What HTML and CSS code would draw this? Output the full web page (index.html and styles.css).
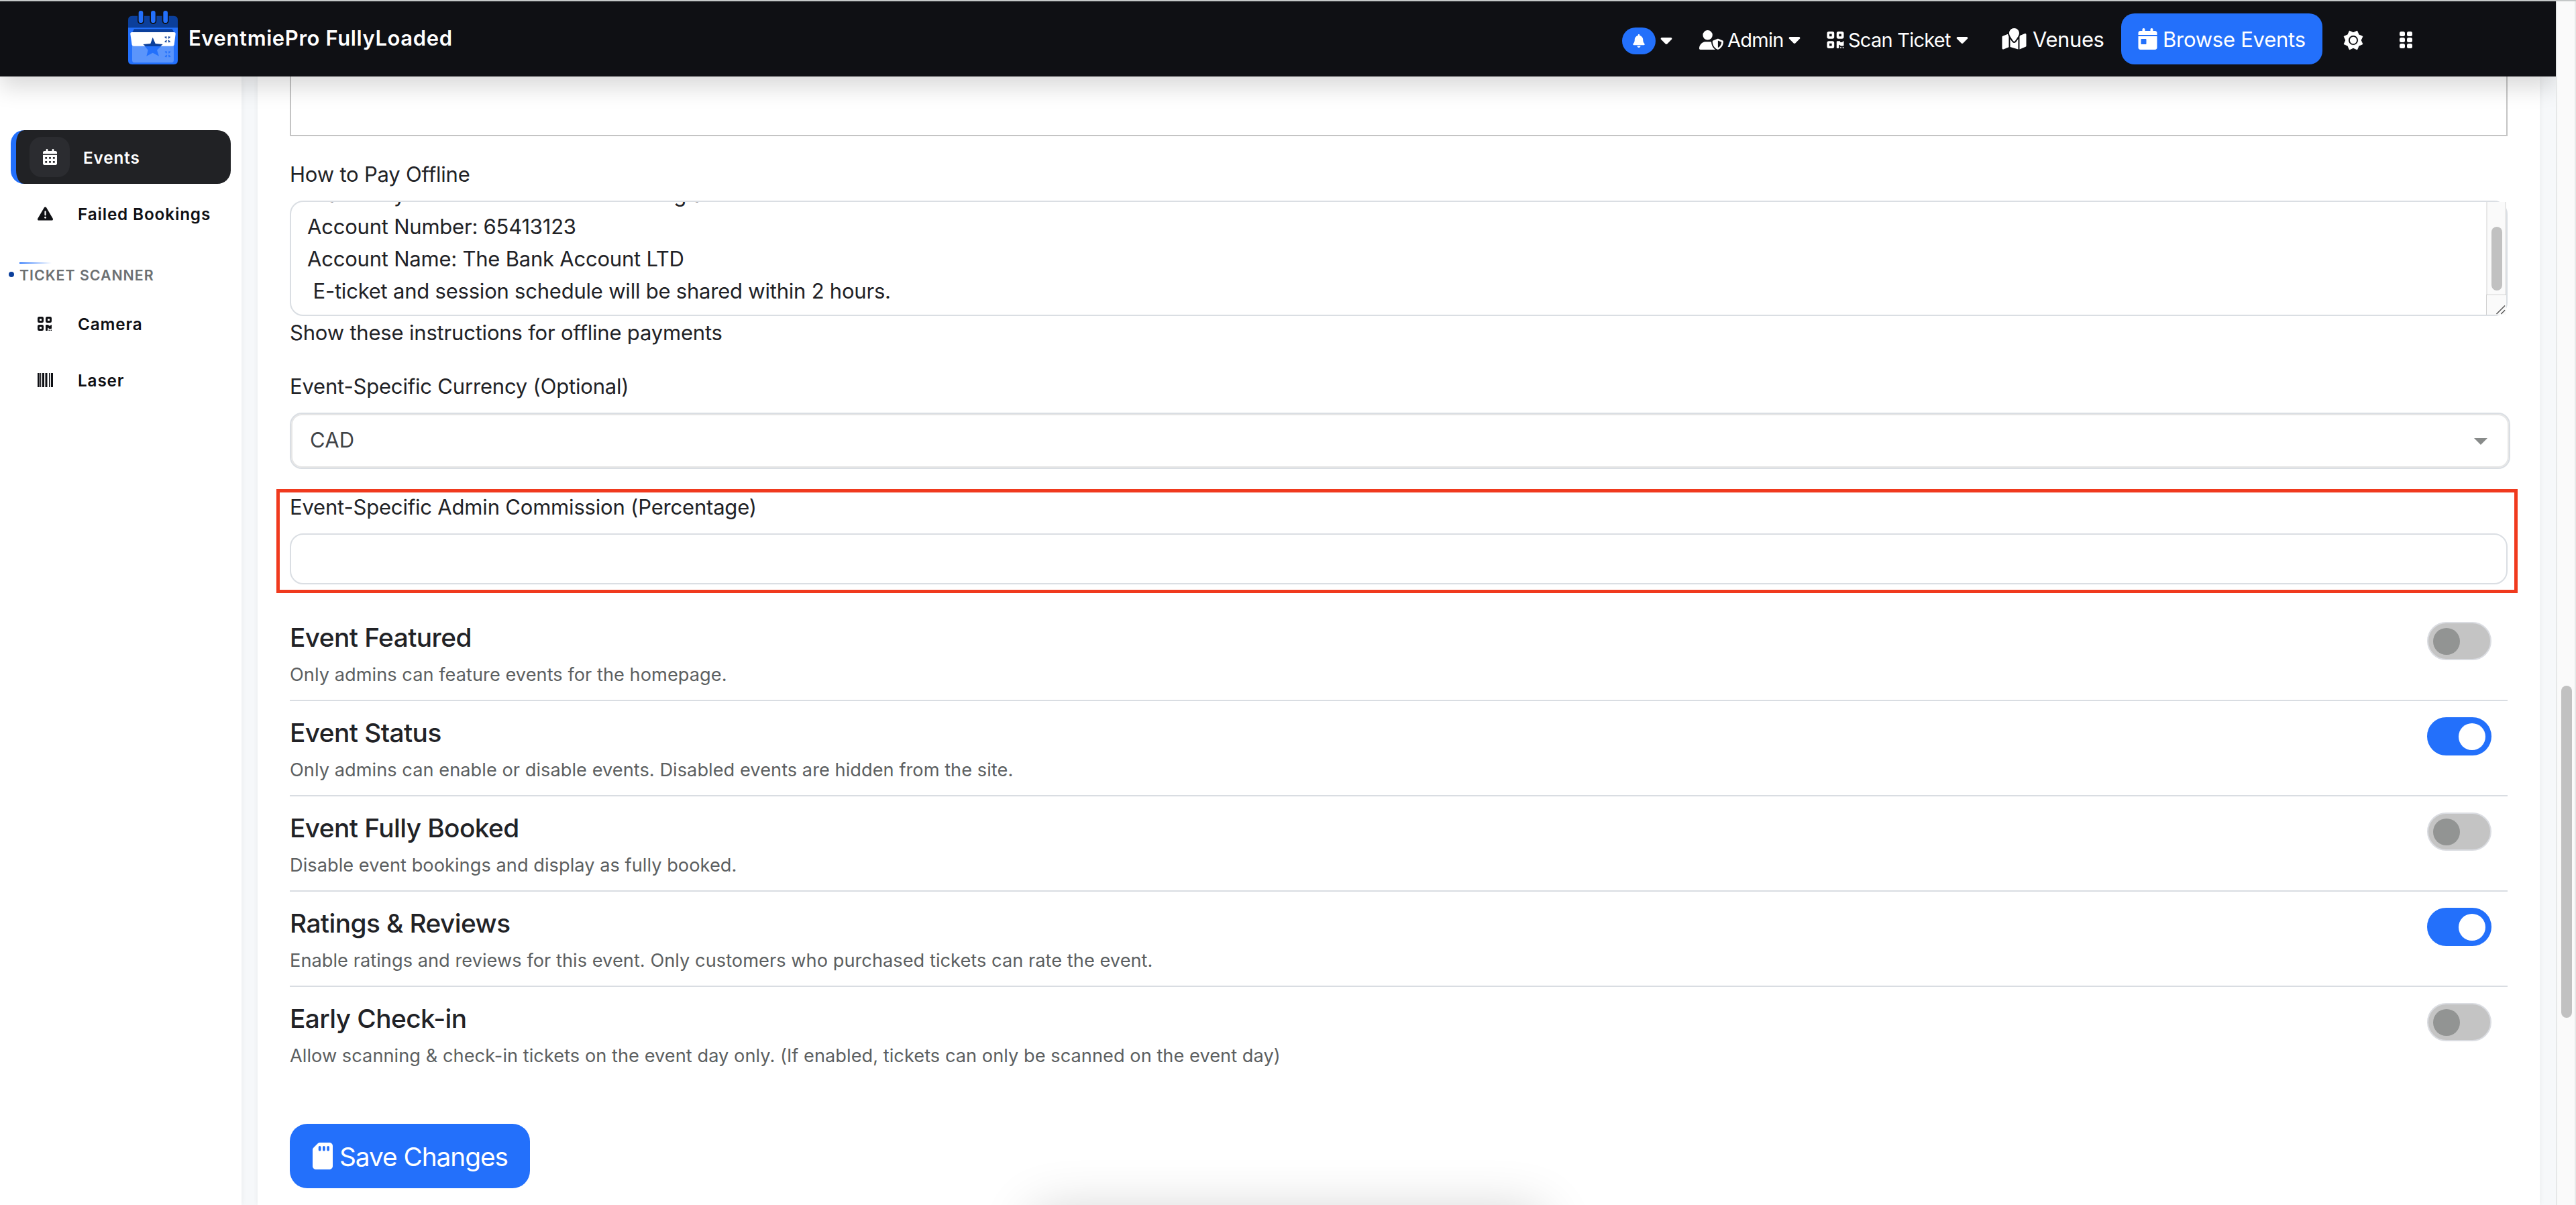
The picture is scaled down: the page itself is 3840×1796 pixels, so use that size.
FILE: index.html
```
<!DOCTYPE html>
<html lang="en">
<head>
    <meta charset="UTF-8">
    <meta name="viewport" content="width=device-width, initial-scale=1.0">
    <title>EventmiePro FullyLoaded</title>
    <link rel="stylesheet" href="styles.css">
</head>
<body>
    <!-- Shared icons -->
    <svg class="sprite" xmlns="http://www.w3.org/2000/svg">
        <symbol id="caret" viewBox="0 192 320 192">
            <path d="M137.4 374.6c12.5 12.5 32.8 12.5 45.3 0l128-128c9.2-9.2 11.9-22.9 6.9-34.9s-16.6-19.8-29.6-19.8L32 192c-12.9 0-24.6 7.8-29.6 19.8s-2.2 25.7 6.9 34.9l128 128z"/>
        </symbol>
        <symbol id="qrcode" viewBox="0 32 448 448">
            <path fill-rule="evenodd" d="M48 32h96a48 48 0 0 1 48 48v96a48 48 0 0 1-48 48H48a48 48 0 0 1-48-48V80a48 48 0 0 1 48-48zm16 64v64h64V96zM304 32h96a48 48 0 0 1 48 48v96a48 48 0 0 1-48 48h-96a48 48 0 0 1-48-48V80a48 48 0 0 1 48-48zm16 64v64h64V96zM48 288h96a48 48 0 0 1 48 48v96a48 48 0 0 1-48 48H48a48 48 0 0 1-48-48v-96a48 48 0 0 1 48-48zm16 64v64h64v-64zM256 304c0-8.8 7.2-16 16-16h64c8.8 0 16 7.2 16 16s7.2 16 16 16h32c8.8 0 16-7.2 16-16s7.2-16 16-16 16 7.2 16 16v96c0 8.8-7.2 16-16 16h-64c-8.8 0-16-7.2-16-16s-7.2-16-16-16-16 7.2-16 16v64c0 8.8-7.2 16-16 16h-32c-8.8 0-16-7.2-16-16zM352 448h32v32h-32zM416 448h32v32h-32z"/>
        </symbol>
    </svg>

    <div class="page">
        <header class="navbar">
            <a class="brand">
                <svg class="logo" viewBox="33 17 222 240">
                    <path fill="#0b3f9b" d="M33 96V58q0-18 18-18h186q18 0 18 18v38z"/>
                    <path fill="#2370fb" d="M33 93h222v146q0 18-18 18H51q-18 0-18-18z"/>
                    <g stroke-linecap="round">
                        <path stroke="#0f1014" stroke-width="30" d="M90 40v22M145 40v22M200 40v22"/>
                        <path stroke="#2370fb" stroke-width="20" d="M90 27v34M145 27v34M200 27v34"/>
                    </g>
                    <path fill="#0b3f9b" d="M60 99h170l8 14H52z"/>
                    <path fill="#5b95fb" d="M51 174h186v64q0 11-11 11H62q-11 0-11-11z"/>
                    <path fill="#fff" d="M50 113h188q8 0 7 8l-6 48q-1 6-8 6H58q-7 0-8-6l-7-48q-1-8 7-8z"/>
                    <path fill="#0b3f9b" d="M143 136l12 28 33 3-10 9h-68l-10-9 33-3z"/>
                    <path fill="#2370fb" d="M108 176h72l-18 17 9 27-28-15-28 15 7-27z"/>
                    <g fill="none" stroke="#0b3f9b" stroke-width="4">
                        <path d="M197 133l8 8m8 8l8 8M221 133l-8 8m-8 8l-8 8M203 132v8M215 132v8M203 151v8M215 151v8"/>
                        <path stroke="#2370fb" d="M198 199l8 8m8 8l8 8M222 199l-8 8m-8 8l-8 8M204 198v8M216 198v8M204 217v8M216 217v8"/>
                    </g>
                </svg>
                <span>EventmiePro FullyLoaded</span>
            </a>
            <nav class="nav">
                <a class="nav-item nav-bell">
                    <span class="badge">
                        <svg viewBox="0 0 448 512"><path d="M224 0c-17.7 0-32 14.3-32 32V51.2C119 66 64 130.6 64 208v18.8c0 47-17.3 92.4-48.5 127.6l-7.4 8.3c-8.4 9.4-10.4 22.9-5.3 34.4S19.4 416 32 416H416c12.6 0 24-7.4 29.2-18.9s3.1-25-5.3-34.4l-7.4-8.3C401.3 319.2 384 273.9 384 226.8V208c0-77.4-55-142-128-156.8V32c0-17.7-14.3-32-32-32zm45.3 493.3c12-12 18.7-28.3 18.7-45.3H160c0 17 6.7 33.3 18.7 45.3s28.3 18.7 45.3 18.7s33.3-6.7 45.3-18.7z"/></svg>
                    </span>
                    <svg class="caret"><use href="#caret"/></svg>
                </a>
                <a class="nav-item nav-admin">
                    <svg class="icon-user" viewBox="0 0 640 512"><path d="M224 256A128 128 0 1 0 224 0a128 128 0 1 0 0 256zm-45.7 48C79.8 304 0 383.8 0 482.3C0 498.7 13.3 512 29.7 512H418.3c1.8 0 3.5-.2 5.3-.5c-76.3-55.1-99.8-141-103.1-200.2c-16.1-4.8-33.1-7.3-50.7-7.3H178.3zm308.8-78.3l-120 48C358 277.4 352 286.2 352 296c0 63.3 25.9 168.8 134.8 214.2c5.9 2.5 12.6 2.5 18.5 0C614.1 464.8 640 359.3 640 296c0-9.8-6-18.6-15.1-22.3l-120-48c-5.7-2.3-12.1-2.3-17.8 0zM591.4 312c-3.9 50.7-27.2 116.7-95.4 149.7V273.8L591.4 312z"/></svg>
                    <span>Admin</span>
                    <svg class="caret"><use href="#caret"/></svg>
                </a>
                <a class="nav-item nav-scan">
                    <svg class="icon-qr"><use href="#qrcode"/></svg>
                    <span>Scan Ticket</span>
                    <svg class="caret"><use href="#caret"/></svg>
                </a>
                <a class="nav-item nav-venues">
                    <svg class="icon-map" viewBox="0 0 576 512"><path d="M408 120c0 54.6-73.1 151.9-105.2 192c-7.7 9.6-22 9.6-29.6 0C241.1 271.9 168 174.6 168 120C168 53.7 221.7 0 288 0s120 53.7 120 120zM416 200.4c3.5-6.9 6.7-13.8 9.6-20.6c.5-1.2 1-2.5 1.5-3.7l116-46.4C558.9 123.4 576 135 576 152V422.8c0 9.8-6 18.6-15.1 22.3L416 503V200.4zM137.6 138.3c2.4 14.1 7.2 28.3 12.8 41.5c2.9 6.8 6.1 13.7 9.6 20.6V451.8L32.9 502.7C17.1 509 0 497.4 0 480.4V209.6c0-9.8 6-18.6 15.1-22.3l122.6-49zM327.8 332c13.9-17.4 35.7-45.7 56.2-77V504.3L192 449.4V255c20.5 31.3 42.3 59.6 56.2 77c20.5 25.6 59.1 25.6 79.6 0z"/></svg>
                    <span>Venues</span>
                </a>
                <a class="nav-item nav-browse">
                    <svg class="icon-day" viewBox="0 0 448 512"><path d="M128 0c17.7 0 32 14.3 32 32V64H288V32c0-17.7 14.3-32 32-32s32 14.3 32 32V64h48c26.5 0 48 21.5 48 48v48H0V112C0 85.5 21.5 64 48 64H96V32c0-17.7 14.3-32 32-32zM0 192H448V464c0 26.5-21.5 48-48 48H48c-26.5 0-48-21.5-48-48V192zm80 64c-8.8 0-16 7.2-16 16v96c0 8.8 7.2 16 16 16h96c8.8 0 16-7.2 16-16V272c0-8.8-7.2-16-16-16H80z"/></svg>
                    <span>Browse Events</span>
                </a>
                <a class="nav-item nav-theme">
                    <svg viewBox="-16 -16 32 32"><path fill-rule="evenodd" stroke="#fff" stroke-linejoin="round" d="M6.1-14.8L8.7-8.7 14.8-6.1 12 0 14.8 6.1 8.7 8.7 6.1 14.8 0 12-6.1 14.8-8.7 8.7-14.8 6.1-12 0-14.8-6.1-8.7-8.7-6.1-14.8 0-12zM0-8a8 8 0 1 0 0 16a8 8 0 1 0 0-16z"/><circle r="5.5"/></svg>
                </a>
                <a class="nav-item nav-apps">
                    <svg viewBox="0 0 19 25"><rect width="8" height="7" rx="2.5"/><rect x="11" width="8" height="7" rx="2.5"/><rect y="9" width="8" height="7" rx="2.5"/><rect x="11" y="9" width="8" height="7" rx="2.5"/><rect y="18" width="8" height="7" rx="2.5"/><rect x="11" y="18" width="8" height="7" rx="2.5"/></svg>
                </a>
            </nav>
        </header>

        <div class="layout">
            <aside class="sidebar">
                <a class="side-link active">
                    <span class="side-icon">
                        <svg viewBox="0 0 448 512" width="21" height="24"><path fill-rule="evenodd" d="M128 0c17.7 0 32 14.3 32 32V64H288V32c0-17.7 14.3-32 32-32s32 14.3 32 32V64h48c26.5 0 48 21.5 48 48v48H0V112C0 85.5 21.5 64 48 64H96V32c0-17.7 14.3-32 32-32zM0 192H448V464c0 26.5-21.5 48-48 48H48c-26.5 0-48-21.5-48-48V192zM70 256v60h60v-60zM194 256v60h60v-60zM318 256v60h60v-60zM70 384v60h60v-60zM194 384v60h60v-60zM318 384v60h60v-60z"/></svg>
                    </span>
                    <span class="side-text">Events</span>
                </a>
                <a class="side-link">
                    <svg class="side-glyph" viewBox="0 16 512 480" width="23" height="23"><path d="M256 32c14.2 0 27.3 7.5 34.5 19.8l216 368c7.3 12.4 7.3 27.7 .2 40.1S486.3 480 472 480H40c-14.3 0-27.6-7.7-34.7-20.1s-7-27.8 .2-40.1l216-368C228.7 39.5 241.8 32 256 32zm0 128c-13.3 0-24 10.7-24 24V296c0 13.3 10.7 24 24 24s24-10.7 24-24V184c0-13.3-10.7-24-24-24zm32 224a32 32 0 1 0 -64 0 32 32 0 1 0 64 0z"/></svg>
                    <span class="side-text">Failed Bookings</span>
                </a>
                <div class="side-heading">Ticket Scanner</div>
                <a class="side-link">
                    <svg class="side-glyph" width="21" height="21"><use href="#qrcode"/></svg>
                    <span class="side-text">Camera</span>
                </a>
                <a class="side-link">
                    <svg class="side-glyph" viewBox="0 0 23 21" width="23" height="21"><path d="M0 0h3v21H0zM4 0h1.3v21H4zM7 0h3v21H7zM11.5 0h3v21h-3zM17 0h1.5v21H17zM20 0h3v21h-3z"/></svg>
                    <span class="side-text">Laser</span>
                </a>
            </aside>

            <main class="card">
                <div class="editor"></div>

                <label class="label">How to Pay Offline</label>
                <div class="textarea">
                    <div class="textarea-text">Transfer your ticket fee to the following account
Account Number: 65413123
Account Name: The Bank Account LTD
 E-ticket and session schedule will be shared within 2 hours.</div>
                    <div class="textarea-scroll">
                        <div class="textarea-thumb"></div>
                        <svg class="grip" viewBox="0 0 30 30"><path d="M15 29L28 16M22 29L28 23" stroke="#555" stroke-width="1.5" fill="none"/></svg>
                    </div>
                </div>
                <p class="help">Show these instructions for offline payments</p>

                <label class="label label-currency">Event-Specific Currency (Optional)</label>
                <div class="select"><span>CAD</span><i class="select-arrow"></i></div>

                <!-- Commission field, outlined in red -->
                <div class="highlight">
                    <label class="label">Event-Specific Admin Commission (Percentage)</label>
                    <div class="input"></div>
                </div>

                <div class="options">
                    <div class="option">
                        <div>
                            <h4>Event Featured</h4>
                            <p>Only admins can feature events for the homepage.</p>
                        </div>
                        <span class="toggle"></span>
                    </div>
                    <div class="option">
                        <div>
                            <h4>Event Status</h4>
                            <p>Only admins can enable or disable events. Disabled events are hidden from the site.</p>
                        </div>
                        <span class="toggle on"></span>
                    </div>
                    <div class="option">
                        <div>
                            <h4>Event Fully Booked</h4>
                            <p>Disable event bookings and display as fully booked.</p>
                        </div>
                        <span class="toggle"></span>
                    </div>
                    <div class="option">
                        <div>
                            <h4>Ratings &amp; Reviews</h4>
                            <p>Enable ratings and reviews for this event. Only customers who purchased tickets can rate the event.</p>
                        </div>
                        <span class="toggle on"></span>
                    </div>
                    <div class="option">
                        <div>
                            <h4>Early Check-in</h4>
                            <p>Allow scanning &amp; check-in tickets on the event day only. (If enabled, tickets can only be scanned on the event day)</p>
                        </div>
                        <span class="toggle"></span>
                    </div>
                </div>

                <button class="save">
                    <svg viewBox="0 0 384 512"><path fill-rule="evenodd" d="M320 0H141.3C124.3 0 108 6.7 96 18.7L18.7 96C6.7 108 0 124.3 0 141.3V448c0 35.3 28.7 64 64 64H320c35.3 0 64-28.7 64-64V64c0-35.3-28.7-64-64-64zM160 88v48c0 13.3-10.7 24-24 24s-24-10.7-24-24V88c0-13.3 10.7-24 24-24s24 10.7 24 24zm80 0v48c0 13.3-10.7 24-24 24s-24-10.7-24-24V88c0-13.3 10.7-24 24-24s24 10.7 24 24zm80 0v48c0 13.3-10.7 24-24 24s-24-10.7-24-24V88c0-13.3 10.7-24 24-24s24 10.7 24 24z"/></svg>
                    Save Changes
                </button>
            </main>
        </div>
    </div>

    <div class="scrollbar"><div class="scrollbar-thumb"></div></div>
    <div class="dock-shadow"></div>
</body>
</html>
```
FILE: styles.css
```
* {
    box-sizing: border-box;
}

body {
    margin: 0;
    height: 1796px;
    overflow: hidden;
    display: flex;
    position: relative;
    border-top: 2px solid #c5c8c8;
    background: #f6f8fa;
    color: #212226;
    font-family: Inter, "Liberation Sans", sans-serif;
    font-size: 31px;
    letter-spacing: -0.19px;
}

h4, p {
    margin: 0;
}

svg {
    fill: currentColor;
    flex: none;
}

.sprite {
    display: none;
}

.page {
    width: 3810px;
    overflow: hidden;
}

/* Top bar */
.navbar {
    position: relative;
    z-index: 2;
    display: flex;
    align-items: center;
    height: 112px;
    padding-left: 191px;
    background: #0f1014;
    color: #fff;
    box-shadow: 0 16px 32px rgba(0, 0, 0, 0.15);
}

.brand {
    display: flex;
    align-items: center;
    gap: 16px;
    width: 2227px;
    font-weight: 600;
    letter-spacing: 0.6px;
}

.logo {
    width: 74px;
    height: 80px;
    margin-bottom: 4px;
}

.brand span {
    margin-bottom: 3px;
}

.nav {
    display: flex;
    align-items: center;
}

.nav-item {
    display: flex;
    align-items: center;
    font-size: 29px;
    letter-spacing: -0.75px;
    white-space: nowrap;
}

.caret {
    width: 18px;
    height: 10px;
    margin-left: auto;
}

.nav-bell {
    width: 75px;
    margin-top: 6px;
}

.badge {
    display: flex;
    align-items: center;
    justify-content: center;
    width: 50px;
    height: 40px;
    border-radius: 20px;
    background: #2370fb;
}

.badge svg {
    width: 18px;
    height: 20px;
}

.nav-admin {
    width: 151px;
    margin: 3px 0 0 40px;
}

.icon-user {
    width: 36px;
    height: 29px;
    margin-right: 6px;
}

.nav-scan {
    width: 211px;
    margin: 3px 0 0 39px;
}

.icon-qr {
    width: 26px;
    height: 25px;
    margin-right: 6px;
}

.nav-venues {
    width: 152px;
    margin-left: 50px;
    font-size: 31px;
    letter-spacing: -0.4px;
}

.icon-map {
    width: 37px;
    height: 32px;
    margin-right: 9px;
}

.nav-browse {
    width: 300px;
    height: 76px;
    margin-left: 26px;
    padding-left: 25px;
    border-radius: 20px;
    background: #2370fb;
    font-size: 31px;
    letter-spacing: -0.25px;
}

.icon-day {
    width: 29px;
    height: 32px;
    margin-right: 8px;
}

.nav-theme {
    margin: 3px 0 0 31px;
}

.nav-theme svg {
    width: 30px;
    height: 30px;
}

.nav-apps {
    margin: 3px 0 0 54px;
}

.nav-apps svg {
    width: 19px;
    height: 25px;
}

.layout {
    display: flex;
    gap: 24px;
    height: 1682px;
}

/* Sidebar */
.sidebar {
    width: 360px;
    padding: 80px 16px 0;
    background: #fff;
    box-shadow: 0 0 8px rgba(0, 0, 0, 0.06);
}

.side-link {
    display: grid;
    grid-template-columns: 60px auto;
    justify-content: start;
    align-items: center;
    height: 80px;
    margin-bottom: 4px;
    padding-left: 40px;
    color: #0f1014;
    font-size: 24.3px;
    font-weight: 600;
    letter-spacing: 0.85px;
}

.side-link.active {
    column-gap: 20px;
    padding-left: 20px;
    border-left: 8px solid #2370fb;
    border-radius: 20px;
    background: #212225;
    color: #fff;
}

.side-icon {
    display: flex;
    align-items: center;
    justify-content: center;
    height: 60px;
    border-radius: 18px;
    background: #2b2c30;
}

.side-text {
    padding-top: 2px;
}

.side-heading {
    position: relative;
    margin: 33px 0 19px 13px;
    height: 32px;
    line-height: 38px;
    color: #6c7072;
    font-size: 21.3px;
    font-weight: 600;
    letter-spacing: 1px;
    text-transform: uppercase;
}

.side-heading::before {
    content: "";
    position: absolute;
    top: 0;
    left: 0;
    width: 48px;
    height: 2px;
    background: linear-gradient(90deg, #2370fb, transparent);
}

.side-heading::after {
    content: "";
    position: absolute;
    top: 14px;
    left: -16px;
    width: 8px;
    height: 8px;
    border-radius: 50%;
    background: #0b3f9b;
}

/* Form card */
.card {
    width: 3402px;
    padding: 0 48px;
    background: #fff;
    box-shadow: 0 0 8px rgba(0, 0, 0, 0.06);
}

.editor {
    height: 89px;
    margin-bottom: 33px;
    border: 2px solid #c4c4c4;
    border-top: 0;
}

.label {
    display: block;
    line-height: 48px;
}

.textarea {
    display: flex;
    justify-content: space-between;
    height: 172px;
    margin-top: 15px;
    border: 2px solid #dadee3;
    border-radius: 20px;
}

.textarea-text {
    height: 168px;
    overflow: hidden;
    padding-left: 24px;
    line-height: 48px;
    letter-spacing: -0.22px;
    white-space: pre;
}

/* scrolled down past the first line */
.textarea-text::before {
    content: "";
    display: block;
    margin-top: -35px;
}

.textarea-scroll {
    width: 30px;
    border: solid #e8e8e8;
    border-width: 0 2px;
    background: #fafafa;
}

.textarea-thumb {
    width: 16px;
    height: 95px;
    margin: 37px 0 6px 6px;
    border-radius: 8px;
    background: #c1c1c1;
}

.grip {
    display: block;
    width: 30px;
    height: 30px;
    margin-left: -2px;
    border-top: 1px solid #d0d0d0;
    border-left: 1px solid #d0d0d0;
    background: #fafafa;
}

.help {
    margin-top: 1px;
    line-height: 48px;
}

.label-currency {
    margin-top: 32px;
}

.select {
    display: flex;
    align-items: center;
    justify-content: space-between;
    width: 3310px;
    height: 84px;
    margin-top: 15px;
    padding: 0 32px 0 28px;
    border: 2px solid #dadee3;
    border-radius: 18px;
    box-shadow: inset 0 0 0 2px #e6e6e6;
    color: #3f4347;
}

.select span {
    margin-bottom: 3px;
    letter-spacing: 0.1px;
}

.select-arrow {
    margin-top: 2px;
    border: 10px solid transparent;
    border-top-color: #888b8a;
    border-bottom: 0;
}

.highlight {
    width: 3341px;
    height: 155px;
    margin: 30px 0 19px -20px;
    padding: 0 10px 0 15px;
    border: 5px solid #f03a1e;
}

.highlight .label {
    line-height: 44px;
}

.input {
    height: 76px;
    margin-top: 17px;
    border: 2px solid #dadee3;
    border-radius: 20px;
}

/* Switch rows */
.option {
    display: flex;
    justify-content: space-between;
    height: 142px;
    padding: 23px 24px 0 0;
    border-bottom: 2px solid #d9dde2;
}

.option:last-child {
    border-bottom: 0;
}

.option h4 {
    font-size: 38.8px;
    font-weight: 500;
    line-height: 48px;
    letter-spacing: -0.57px;
}

.option p {
    margin-top: 11px;
    color: #5c5f61;
    font-size: 27.2px;
    line-height: 42px;
    letter-spacing: 0.04px;
}

.toggle {
    display: flex;
    align-items: center;
    width: 96px;
    height: 57px;
    margin-top: 1px;
    padding: 0 7px;
    border: 2px solid #dadce1;
    border-radius: 29px;
    background: #c4c4c4;
}

.toggle::before {
    content: "";
    width: 40px;
    height: 40px;
    border-radius: 50%;
    background: #929493;
}

.toggle.on {
    justify-content: flex-end;
    border-color: #2370fb;
    background: #2370fb;
}

.toggle.on::before {
    background: #fff;
}

.save {
    display: flex;
    align-items: center;
    gap: 10px;
    width: 358px;
    height: 96px;
    margin-top: 62px;
    padding: 0 0 0 34px;
    border: 0;
    border-radius: 26px;
    background: #2370fb;
    color: #fff;
    font-family: inherit;
    font-size: 38.8px;
    letter-spacing: -1.05px;
}

.save svg {
    width: 30px;
    height: 40px;
}

/* Window scrollbar */
.scrollbar {
    width: 30px;
    padding: 1020px 0 0 6px;
    border: solid #e6e8e8;
    border-width: 0 2px;
    background: #fafafa;
}

.scrollbar-thumb {
    width: 16px;
    height: 495px;
    border-radius: 8px;
    background: #c1c1c1;
}

.dock-shadow {
    position: absolute;
    z-index: 3;
    left: 1540px;
    top: 1804px;
    width: 760px;
    height: 80px;
    border-radius: 20px;
    box-shadow: 0 0 80px rgba(0, 0, 0, 0.19);
}
```
